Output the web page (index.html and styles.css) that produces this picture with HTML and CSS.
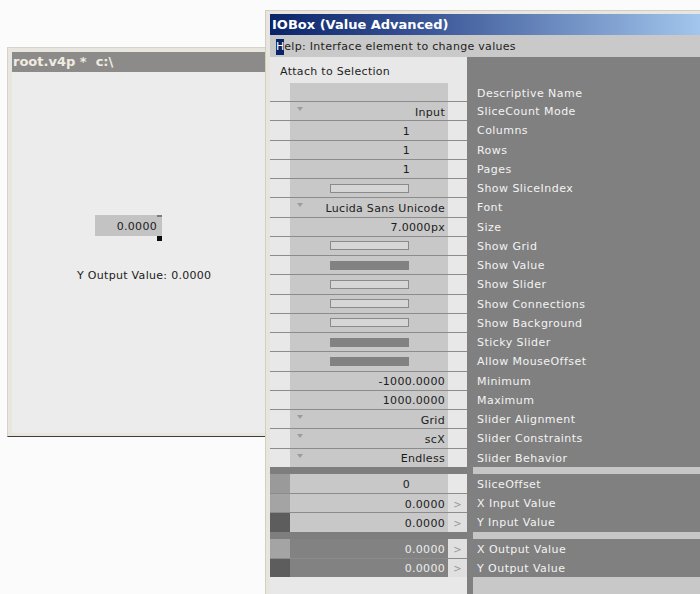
FILE: index.html
```html
<!DOCTYPE html>
<html>
<head>
<meta charset="utf-8">
<title>vvvv</title>
<link rel="stylesheet" href="styles.css">
</head>
<body>
<div class="desk">

  <!-- patch window -->
  <div class="patch">
    <div class="patch-title">root.v4p *&nbsp; c:\</div>
    <div class="patch-canvas">
      <div class="iobox"><span>0.0000</span><i class="pin-top"></i><i class="pin-out"></i></div>
      <div class="readout">Y Output Value: 0.0000</div>
    </div>
  </div>

  <!-- inspector window -->
  <div class="inspector">
    <div class="insp-title">IOBox (Value Advanced)</div>
    <div class="insp-help"><span class="caret">H</span>elp: Interface element to change values</div>
    <div class="insp-body">

      <div class="row head">
        <div class="edit"><span class="attach">Attach to Selection</span></div>
        <div class="lab"></div>
      </div>
      <div class="row desc">
        <div class="edit"><div class="sw"></div><div class="val"></div><div class="go"></div></div>
        <div class="lab">Descriptive Name</div>
      </div>

      <div class="row"><div class="edit"><div class="sw"></div><div class="val"><i class="drop"></i>Input</div><div class="go"></div></div><div class="lab">SliceCount Mode</div></div>
      <div class="row"><div class="edit"><div class="sw"></div><div class="val int">1</div><div class="go"></div></div><div class="lab">Columns</div></div>
      <div class="row"><div class="edit"><div class="sw"></div><div class="val int">1</div><div class="go"></div></div><div class="lab">Rows</div></div>
      <div class="row"><div class="edit"><div class="sw"></div><div class="val int">1</div><div class="go"></div></div><div class="lab">Pages</div></div>
      <div class="row"><div class="edit"><div class="sw"></div><div class="val center"><b class="tog"></b></div><div class="go"></div></div><div class="lab">Show SliceIndex</div></div>
      <div class="row"><div class="edit"><div class="sw"></div><div class="val"><i class="drop"></i>Lucida Sans Unicode</div><div class="go"></div></div><div class="lab">Font</div></div>
      <div class="row"><div class="edit"><div class="sw"></div><div class="val">7.0000px</div><div class="go"></div></div><div class="lab">Size</div></div>
      <div class="row"><div class="edit"><div class="sw"></div><div class="val center"><b class="tog"></b></div><div class="go"></div></div><div class="lab">Show Grid</div></div>
      <div class="row"><div class="edit"><div class="sw"></div><div class="val center"><b class="tog on"></b></div><div class="go"></div></div><div class="lab">Show Value</div></div>
      <div class="row"><div class="edit"><div class="sw"></div><div class="val center"><b class="tog"></b></div><div class="go"></div></div><div class="lab">Show Slider</div></div>
      <div class="row"><div class="edit"><div class="sw"></div><div class="val center"><b class="tog"></b></div><div class="go"></div></div><div class="lab">Show Connections</div></div>
      <div class="row"><div class="edit"><div class="sw"></div><div class="val center"><b class="tog"></b></div><div class="go"></div></div><div class="lab">Show Background</div></div>
      <div class="row"><div class="edit"><div class="sw"></div><div class="val center"><b class="tog on"></b></div><div class="go"></div></div><div class="lab">Sticky Slider</div></div>
      <div class="row"><div class="edit"><div class="sw"></div><div class="val center"><b class="tog on"></b></div><div class="go"></div></div><div class="lab">Allow MouseOffset</div></div>
      <div class="row"><div class="edit"><div class="sw"></div><div class="val">-1000.0000</div><div class="go"></div></div><div class="lab">Minimum</div></div>
      <div class="row"><div class="edit"><div class="sw"></div><div class="val">1000.0000</div><div class="go"></div></div><div class="lab">Maximum</div></div>
      <div class="row"><div class="edit"><div class="sw"></div><div class="val"><i class="drop"></i>Grid</div><div class="go"></div></div><div class="lab">Slider Alignment</div></div>
      <div class="row"><div class="edit"><div class="sw"></div><div class="val"><i class="drop"></i>scX</div><div class="go"></div></div><div class="lab">Slider Constraints</div></div>
      <div class="row"><div class="edit"><div class="sw"></div><div class="val"><i class="drop"></i>Endless</div><div class="go"></div></div><div class="lab">Slider Behavior</div></div>

      <div class="band"><div class="b-edit"></div><div class="b-gap"></div><div class="b-light"></div></div>

      <div class="row pin first"><div class="edit"><div class="sw mid"></div><div class="val int">0</div><div class="go"></div></div><div class="lab">SliceOffset</div></div>
      <div class="row pin"><div class="edit"><div class="sw light"></div><div class="val">0.0000</div><div class="go arrow">&gt;</div></div><div class="lab">X Input Value</div></div>
      <div class="row pin"><div class="edit"><div class="sw dark"></div><div class="val">0.0000</div><div class="go arrow">&gt;</div></div><div class="lab">Y Input Value</div></div>

      <div class="band"><div class="b-edit"></div><div class="b-gap"></div><div class="b-light"></div></div>

      <div class="row pin first"><div class="edit"><div class="sw light"></div><div class="val out">0.0000</div><div class="go arrow">&gt;</div></div><div class="lab">X Output Value</div></div>
      <div class="row pin"><div class="edit"><div class="sw dark"></div><div class="val out">0.0000</div><div class="go arrow">&gt;</div></div><div class="lab">Y Output Value</div></div>

      <div class="foot"><div class="b-edit"></div><div class="b-gap"></div><div class="b-light"></div></div>
    </div>
  </div>

</div>
</body>
</html>
```

FILE: styles.css
```css
html, body {
  margin: 0;
  padding: 0;
  width: 700px;
  height: 594px;
  overflow: hidden;
  background: #fbfbfb;
  font-family: "DejaVu Sans", Verdana, sans-serif;
  font-size: 11px;
}

.desk {
  position: relative;
  width: 700px;
  height: 594px;
}

/* ---------- patch window ---------- */
.patch {
  position: absolute;
  left: 7px;
  top: 47px;
  width: 262px;
  height: 390px;
  box-sizing: border-box;
  border: 1px solid #d6d2ca;
  border-bottom: 1px solid #3c3c3c;
  padding: 4px 0 3px 4px;
  background: #e9e6e0;
  display: flex;
  flex-direction: column;
}

.patch-title {
  height: 20px;
  line-height: 20px;
  background: #8d8b8a;
  color: #f1ece1;
  font-weight: bold;
  font-size: 13px;
  padding-left: 1px;
  white-space: nowrap;
}

.patch-canvas {
  position: relative;
  flex: 1;
  background: #ececec;
}

.iobox {
  position: absolute;
  left: 83px;
  top: 143px;
  width: 67px;
  height: 21px;
  background: #c3c3c3;
  color: #202020;
  display: flex;
  align-items: center;
  justify-content: flex-end;
  padding: 2px 5px 0 0;
  box-sizing: border-box;
  letter-spacing: 0.3px;
}

.iobox .pin-top {
  position: absolute;
  right: 0;
  top: 0;
  width: 5px;
  height: 2px;
  background: #7c7c7c;
}

.iobox .pin-out {
  position: absolute;
  right: 0;
  bottom: -5px;
  width: 5px;
  height: 5px;
  background: #0c0c0c;
}

.readout {
  position: absolute;
  left: 65px;
  top: 197px;
  color: #202020;
  letter-spacing: 0.3px;
  white-space: nowrap;
}

/* ---------- inspector window ---------- */
.inspector {
  position: absolute;
  left: 265px;
  top: 10px;
  right: -10px;
  bottom: 0;
  border: 1px solid #d2cec6;
  border-right: 0;
  border-bottom: 0;
  padding: 3px 0 0 4px;
  background: #e8e5de;
  display: flex;
  flex-direction: column;
}

.insp-title {
  height: 21px;
  line-height: 21px;
  padding-left: 2px;
  background: linear-gradient(to right, #0a246a 0%, #3a5596 35%, #a6caf0 100%);
  color: #ffffff;
  font-weight: bold;
  font-size: 13px;
  white-space: nowrap;
}

.insp-help {
  height: 22px;
  line-height: 23px;
  background: #c9c9c9;
  color: #1e1e1e;
  padding-left: 6px;
  letter-spacing: 0.3px;
  white-space: nowrap;
}

.insp-help .caret {
  display: inline-block;
  background: #0a246a;
  color: #ffffff;
  line-height: 16px;
  letter-spacing: 0;
}

.insp-body {
  flex: 1;
  display: flex;
  flex-direction: column;
}

/* one property line: editor part + label */
.row {
  display: flex;
  height: 19.25px;
  flex: none;
}

.edit {
  width: 197px;
  flex: none;
  display: flex;
  box-sizing: border-box;
  border-top: 1px solid #8c8c8c;
  background: #e8e8e8;
}

.sw { width: 20px; flex: none; }
.sw.mid { background: #9a9a9a; }
.sw.light { background: #a4a4a4; }
.sw.dark { background: #5d5d5d; }

.val {
  width: 158px;
  flex: none;
  box-sizing: border-box;
  background: #c8c8c8;
  color: #1c1c1c;
  display: flex;
  align-items: center;
  justify-content: flex-end;
  padding: 2px 3px 0 7px;
  letter-spacing: 0.3px;
  white-space: nowrap;
}

.val.int { padding-right: 38px; }
.val.center { justify-content: center; padding: 0 0 0 1px; }
.val.out { background: #828282; color: #ececec; }

.val .drop {
  align-self: flex-start;
  margin-top: 3px;
  margin-right: auto;
  width: 0;
  height: 0;
  border-left: 3px solid transparent;
  border-right: 3px solid transparent;
  border-top: 4px solid #9c9c9c;
}

.tog {
  display: block;
  width: 79px;
  height: 9px;
  box-sizing: border-box;
  border: 1px solid #8a8a8a;
  background: #d6d6d6;
}

.tog.on { background: #828282; border-color: #828282; }

.go {
  width: 19px;
  flex: none;
  background: #e8e8e8;
}

.go.arrow {
  background: #e0e0e0;
  color: #9a9a9a;
  font-size: 10px;
  display: flex;
  align-items: center;
  justify-content: center;
  padding-top: 2px;
  box-sizing: border-box;
}

.lab {
  flex: 1;
  box-sizing: border-box;
  background: #808080;
  color: #f3f3f3;
  padding: 2px 0 0 10px;
  display: flex;
  align-items: center;
  letter-spacing: 0.45px;
  white-space: nowrap;
}

/* header lines above the properties */
.row.head { height: 26px; }
.row.head .edit { border-top: 0; align-items: center; padding: 2px 0 0 10px; }
.attach { color: #1e1e1e; letter-spacing: 0.3px; white-space: nowrap; }

.row.desc { height: 18px; }
.row.desc .edit { border-top: 0; }
.row.desc .lab { padding-top: 3px; }

.row.first .edit { border-top: 0; }

/* group separators */
.band, .foot {
  display: flex;
  flex: none;
}

.band { height: 7px; }
.foot { flex: 1; }

.b-edit { width: 197px; flex: none; background: #7e7e7e; }
.b-gap { width: 6px; flex: none; background: #808080; }
.b-light { flex: 1; background: #c6c6c6; }

.foot .b-edit { background: #e8e8e8; }
.foot .b-light { background: #c8c8c8; }
```
